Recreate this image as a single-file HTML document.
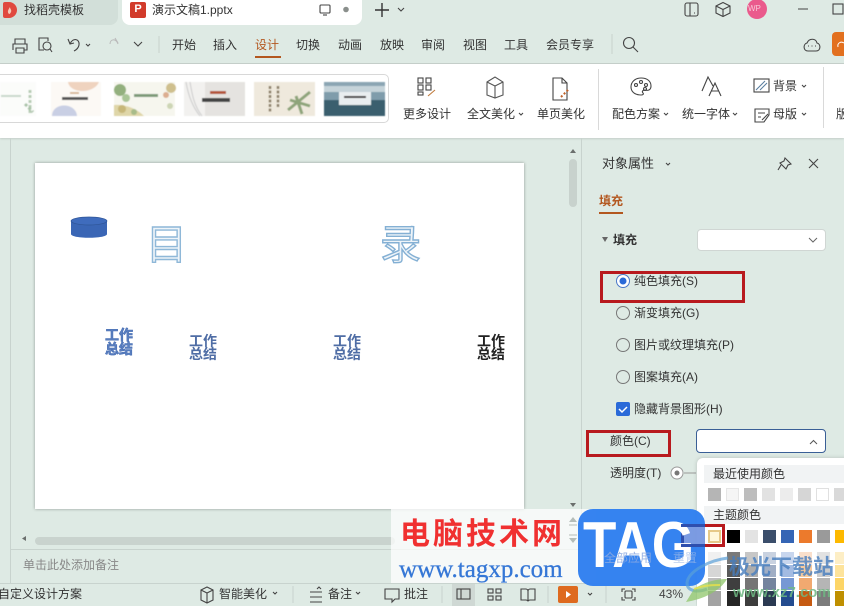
<!DOCTYPE html>
<html><head><meta charset="utf-8">
<style>
*{box-sizing:border-box}
html,body{margin:0;padding:0}
body{width:844px;height:606px;position:relative;overflow:hidden;background:#deeae4;font-family:"Liberation Sans","Noto Sans CJK SC",sans-serif;color:#333;font-size:12px}
.a{position:absolute}
.t{position:absolute;white-space:nowrap;line-height:16px}
svg{position:absolute;overflow:visible}
.s{fill:none;stroke:#444;stroke-width:1.1}
.sw{position:absolute;width:13px;height:13px}
</style></head><body>

<!-- tab bar -->
<div class="a" style="left:0;top:0;width:118px;height:25px;background:#d2dfd9;border-radius:0 0 8px 0"></div>
<div class="a" style="left:3px;top:2px;width:14px;height:16px;background:#e0493f;border-radius:2px 8px 8px 2px"></div>
<svg style="left:0;top:0" width="20" height="20"><path d="M9 14c-2-2-1-4 1-7 0 2 2 3 1 5-.5 1-1 2-2 2z" fill="#f6c9b8"/></svg>
<div class="t" style="left:24px;top:2px;font-size:12px;color:#333">找稻壳模板</div>
<div class="a" style="left:122px;top:0;width:240px;height:25px;background:#fff;border-radius:0 0 8px 8px"></div>
<div class="a" style="left:130px;top:2px;width:16px;height:16px;background:#d23b2b;border-radius:2px;color:#fff;font-size:11px;font-weight:bold;text-align:center;line-height:15px">P</div>
<div class="t" style="left:152px;top:2px;font-size:12px;color:#333">演示文稿1.pptx</div>
<svg style="left:0;top:0" width="844" height="64">
<rect class="s" x="320" y="5" width="10" height="8" rx="1" stroke="#777"/><path class="s" d="M323 15h4"/>
<circle cx="346" cy="9.500" r="2.800" fill="#8a8f8c"/>
<path d="M375 10h14M382 3v14" stroke="#333" stroke-width="1.400" fill="none"/>
<path class="s" d="M398 8l3 3 3-3"/>
<rect class="s" x="685" y="3" width="13" height="13" rx="2"/><path class="s" d="M690 3v13M694 13h1"/>
<path class="s" d="M723 2.500l7 3.500v7l-7 3.500-7-3.500v-7zM716 6l7 3.500 7-3.500M723 9.500v7"/>
<circle cx="757" cy="9" r="10" fill="#ea5a8c"/>
<path d="M798 9h10" stroke="#444" stroke-width="1"/>
<rect class="s" x="833" y="4" width="10" height="10"/>
</svg>
<div class="t" style="left:748px;top:1px;font-size:8px;color:#f7c9d8">WP</div>

<!-- toolbar -->
<svg style="left:0;top:0" width="844" height="64">
<g class="s"><path d="M15 44v-5h10v5M13 50v-6h14v6h-3M16 48h8v5h-8z"/>
<path d="M46 38h-7v12h5M44 38h4v3"/><circle cx="47" cy="46" r="4"/><path d="M50 49l2 3"/>
<path d="M70 44c3-7 10-5 9 1-.5 3-3 5-5 6M68 39l2 5 4-1"/><path d="M86 44l2 2 2-2"/>
<path d="M118 44c-2-6-8-5-8 0" stroke="#bbb"/><path d="M115 38l3 5" stroke="#bbb"/>
<path d="M134 42l4 4 4-4"/></g>
<path d="M159 36v17M612 34v20" stroke="#c8d2cd"/>
<g class="s"><circle cx="629" cy="43" r="5.500"/><path d="M633 47l5 5"/>
<path d="M808 51h8c5 0 5-7 1-8-1-5-8-5-10 0-4 1-4 8 1 8z"/><path d="M808 46h1M811.500 46h1M815 46h1"/></g>
<rect x="832" y="32" width="20" height="24" rx="4" fill="#e2701f"/>
<path d="M838 47c-1-4 3-6 6-4" stroke="#fff" fill="none"/>
<path d="M0 63.500h844" stroke="#c6d0cb"/>
</svg>
<div class="t" style="left:172px;top:37px">开始</div>
<div class="t" style="left:213px;top:37px">插入</div>
<div class="t" style="left:255px;top:37px;color:#b3571f">设计</div>
<div class="a" style="left:255px;top:56px;width:26px;height:2px;background:#b3571f"></div>
<div class="t" style="left:296px;top:37px">切换</div>
<div class="t" style="left:338px;top:37px">动画</div>
<div class="t" style="left:380px;top:37px">放映</div>
<div class="t" style="left:421px;top:37px">审阅</div>
<div class="t" style="left:463px;top:37px">视图</div>
<div class="t" style="left:504px;top:37px">工具</div>
<div class="t" style="left:546px;top:37px">会员专享</div>

<!-- ribbon -->
<div class="a" style="left:0;top:64px;width:844px;height:74px;background:#fff;box-shadow:0 1px 2px rgba(0,0,0,.12)"></div>
<div class="a" style="left:-8px;top:74px;width:397px;height:49px;background:#fff;border:1px solid #d8d8d8;border-radius:5px"></div>
<!-- thumbs -->
<svg style="left:0;top:82px" width="390" height="34">
<defs><filter id="b" x="-20%" y="-20%" width="140%" height="140%"><feGaussianBlur stdDeviation=".6"/></filter></defs>
<g filter="url(#b)">
<rect x="0" y="0" width="36" height="34" fill="#fbfcfa"/>
<path d="M1 14h20" stroke="#c8d8cc" stroke-width="2"/>
<path d="M30 8v24" stroke="#b7ccb5" stroke-width="3" stroke-dasharray="3 2"/>
<path d="M25 22l8 8" stroke="#a9c3a8" stroke-width="3" stroke-dasharray="3 2"/>
<rect x="51" y="0" width="50" height="34" fill="#fcf9f5"/>
<path d="M68 0c2 12 26 12 31 0z" fill="#efd3bf"/>
<path d="M52 34c0-14 24-14 25 0z" fill="#c9cfe4"/>
<rect x="62" y="15" width="26" height="3" fill="#555"/><rect x="70" y="10" width="9" height="2" fill="#d8b89a"/>
<rect x="114" y="0" width="61" height="34" fill="#f6f6ee"/>
<circle cx="120" cy="8" r="6" fill="#93b07e"/><circle cx="126" cy="16" r="4" fill="#a9c596"/>
<path d="M114 34v-11c10-1 22 3 30 11z" fill="#dfd6a8"/><circle cx="122" cy="27" r="4" fill="#c7b779"/><circle cx="134" cy="30" r="3" fill="#a8bc8a"/>
<circle cx="171" cy="6" r="5" fill="#cfc08e"/><circle cx="166" cy="13" r="3" fill="#dcae90"/><circle cx="170" cy="24" r="3" fill="#cdd6b5"/>
<rect x="134" y="12" width="24" height="3" fill="#7d9a78"/>
<rect x="184" y="0" width="61" height="34" fill="#f2f1ef"/>
<rect x="205" y="0" width="40" height="34" fill="#e5e3e0"/>
<path d="M186 0c2 12 6 24 14 34M190 0c2 12 4 24 12 34" stroke="#ccc" fill="none"/>
<rect x="210" y="9" width="16" height="3" fill="#b4573a"/><rect x="202" y="16" width="28" height="4" fill="#444"/>
<rect x="254" y="0" width="61" height="34" fill="#efe9dd"/>
<path d="M270 4v26M278 4v22" stroke="#8b7f66" stroke-width="2.500" stroke-dasharray="3 1.500"/>
<path d="M288 28l22-18M296 14l6 18M290 18l20 6" stroke="#8ea47a" stroke-width="3" fill="none"/>
<rect x="324" y="0" width="61" height="34" fill="#7f9cab"/>
<rect x="324" y="0" width="61" height="10" fill="#8ba5b3"/>
<path d="M324 4l61 0 0 6-61 0z" fill="#c5d3d9"/>
<rect x="324" y="18" width="61" height="16" fill="#3b5f6e"/>
<rect x="339" y="10" width="32" height="13" fill="#e9eef0"/><rect x="344" y="14" width="22" height="2" fill="#333"/>
</g>
</svg>

<svg style="left:0;top:64px" width="844" height="74">
<path d="M598.500 5v61M823.500 3v61" stroke="#d9d9d9"/>
<g class="s" transform="translate(0,0)">
<rect x="418" y="14" width="5" height="5"/><rect x="426" y="14" width="5" height="5"/><rect x="418" y="21" width="5" height="5"/><rect x="426" y="21" width="5" height="5"/><rect x="418" y="28" width="5" height="3"/>
<path d="M428 32l7-6" stroke="#c07a3c"/>
<path d="M487 18l8-5 8 5v13l-8 3-8-3zM487 18l8 4 8-4M495 22v12" stroke="#555"/>
<path d="M553 14h9l5 5v17h-14zM562 14v5h5"/>
<path d="M561 33l8-8" stroke="#c0622a" stroke-dasharray="2 2" stroke-width="2"/>
<path d="M641 31c-7 0-10-4-10-8 0-5 4-9 10-9s10 3 10 8c0 4-3 5-6 4-3 0-3 2-2 3s0 2-2 2z"/>
<circle cx="636" cy="21" r="1.500"/><circle cx="641" cy="18" r="1.500"/><circle cx="646" cy="21" r="1.500"/><circle cx="645" cy="25" r="1.500"/>
<path d="M702 27l6-14 5 9M709 32l6-13 6 13M711 27h8"/>
<rect x="754" y="15" width="15" height="13"/><path d="M756 26l9-9M760 26l7-7" stroke="#5a7fa0"/>
<path d="M755 45h14v6l-5 7h-9zM758 49h7M758 53h3M762 56l6-6" />
</g>
</svg>
<div class="t" style="left:403px;top:106px">更多设计</div>
<div class="t" style="left:467px;top:106px">全文美化</div>
<div class="t" style="left:537px;top:106px">单页美化</div>
<div class="t" style="left:612px;top:106px">配色方案</div>
<div class="t" style="left:682px;top:106px">统一字体</div>
<div class="t" style="left:773px;top:78px">背景</div>
<div class="t" style="left:773px;top:106px">母版</div>
<div class="t" style="left:836px;top:106px">版</div>
<svg style="left:0;top:0" width="844" height="130"><g class="s">
<path d="M519 113l2 2 2-2M664 113l2 2 2-2M733 113l2 2 2-2M802 85l2 2 2-2M802 113l2 2 2-2"/></g></svg>

<!-- workspace -->
<div class="a" style="left:10px;top:138px;width:1px;height:445px;background:#c8d3ce"></div>
<div class="a" style="left:581px;top:138px;width:1px;height:445px;background:#c8d3ce"></div>
<div class="a" style="left:35px;top:163px;width:489px;height:346px;background:#fff;box-shadow:0 0 3px rgba(0,0,0,.35)"></div>
<div class="a" style="left:569px;top:159px;width:8px;height:48px;background:#c8d2cd;border-radius:4px"></div>
<svg style="left:0;top:0" width="600" height="560">
<path d="M570 153l3-4 3 4z" fill="#6b6f6d"/><path d="M570 503l3 4 3-4z" fill="#6b6f6d"/><path d="M26 541l-4-2.500 4-2.500z" fill="#6b6f6d"/>
<!-- cylinder -->
<path d="M71 221v13c0 5 36 5 36 0v-13z" fill="#3a66b5"/>
<ellipse cx="89" cy="221" rx="18" ry="4" fill="#3f6cbd" stroke="#2f5597" stroke-width=".7"/>
</svg>
<div class="t" style="left:146px;top:220px;font-size:41px;line-height:50px;color:#eef4f9;-webkit-text-stroke:1.400px #8fb8d8">目</div>
<div class="t" style="left:380px;top:220px;font-size:41px;line-height:50px;color:#eef4f9;-webkit-text-stroke:1.400px #84b0d4">录</div>
<div class="t" style="left:105px;top:328px;font-size:14px;line-height:14px;font-weight:bold;color:#5b80c0;-webkit-text-stroke:.6px #4a70b5;width:30px;white-space:normal;letter-spacing:0">工作总结</div>
<div class="t" style="left:189px;top:335px;font-size:14px;line-height:13px;font-weight:bold;color:#4f6da5;width:30px;white-space:normal">工作总结</div>
<div class="t" style="left:333px;top:335px;font-size:14px;line-height:13px;font-weight:bold;color:#4f6da5;width:30px;white-space:normal">工作总结</div>
<div class="t" style="left:477px;top:335px;font-size:14px;line-height:13px;font-weight:bold;color:#222;width:30px;white-space:normal">工作总结</div>
<div class="a" style="left:35px;top:537px;width:360px;height:8px;background:#c9d3ce;border-radius:4px"></div>
<div class="a" style="left:10px;top:549px;width:571px;height:1px;background:#c8d3ce"></div>
<div class="t" style="left:23px;top:557px;color:#888;font-size:12px">单击此处添加备注</div>

<!-- panel -->
<div class="t" style="left:602px;top:156px;font-size:13px;color:#333">对象属性</div>
<svg style="left:0;top:0" width="844" height="606"><g class="s">
<path d="M666 163l2 2 2-2"/>
<path d="M785 158l6 6-3 1-2 4-6-6 4-2zM781 165l-3 5"/>
<path d="M809 159l9 9M818 159l-9 9"/></g>
<path d="M602 237h6l-3 5z" fill="#666"/>
<circle cx="623" cy="281" r="6.500" fill="#fff" stroke="#4a78c8"/><circle cx="623" cy="281" r="3.500" fill="#2a6ad8"/>
<circle cx="623" cy="313" r="6.500" fill="none" stroke="#777"/>
<circle cx="623" cy="345" r="6.500" fill="none" stroke="#777"/>
<circle cx="623" cy="377" r="6.500" fill="none" stroke="#777"/>
<rect x="616" y="402" width="14" height="14" rx="2" fill="#2a6ad8"/>
<path d="M619 409l3 3 5-5" stroke="#fff" stroke-width="1.500" fill="none"/>
<circle cx="677" cy="473" r="6" fill="#fff" stroke="#999"/><circle cx="677" cy="473" r="2.500" fill="#777"/>
<path d="M684 473h12" stroke="#999"/>
</svg>
<div class="t" style="left:599px;top:193px;color:#b3571f;font-size:12px;font-weight:bold">填充</div>
<div class="a" style="left:599px;top:212px;width:24px;height:2px;background:#b3571f"></div>
<div class="t" style="left:613px;top:232px;font-weight:bold;color:#333">填充</div>
<div class="a" style="left:697px;top:229px;width:129px;height:22px;background:#fff;border:1px solid #d0d6d3;border-radius:4px"></div>
<svg style="left:0;top:0;z-index:1" width="844" height="260"><path d="M809 238l4 4 4-4" fill="none" stroke="#666"/></svg>
<div class="a" style="left:600px;top:271px;width:145px;height:32px;border:3px solid #b81a1e"></div>
<div class="t" style="left:634px;top:273px">纯色填充(S)</div>
<div class="t" style="left:634px;top:305px">渐变填充(G)</div>
<div class="t" style="left:634px;top:337px">图片或纹理填充(P)</div>
<div class="t" style="left:634px;top:369px">图案填充(A)</div>
<div class="t" style="left:634px;top:401px">隐藏背景图形(H)</div>
<div class="a" style="left:586px;top:430px;width:85px;height:27px;border:3px solid #b81a1e"></div>
<div class="t" style="left:610px;top:433px">颜色(C)</div>
<div class="a" style="left:696px;top:429px;width:130px;height:24px;background:#fff;border:1px solid #3a5f96;border-radius:4px"></div>
<svg style="left:0;top:0;z-index:1" width="844" height="460"><path d="M810 444l3.500-3.500 3.500 3.500" fill="none" stroke="#555"/></svg>
<div class="t" style="left:610px;top:465px">透明度(T)</div>

<!-- dropdown -->
<div class="a" style="left:697px;top:458px;width:160px;height:148px;background:#fff;border-radius:6px 0 0 0;box-shadow:0 0 4px rgba(0,0,0,.18)"></div>
<div class="a" style="left:704px;top:465px;width:140px;height:18px;background:#f1f3f4"></div>
<div class="t" style="left:713px;top:466px">最近使用颜色</div>
<div class="a" style="left:704px;top:506px;width:140px;height:18px;background:#f1f3f4"></div>
<div class="t" style="left:713px;top:507px">主题颜色</div>
<div class="sw" style="left:708px;top:488px;background:#b5b5b5"></div>
<div class="sw" style="left:726px;top:488px;background:#f5f5f5;border:1px solid #e5e5e5"></div>
<div class="sw" style="left:744px;top:488px;background:#bdbdbd"></div>
<div class="sw" style="left:762px;top:488px;background:#e2e2e2"></div>
<div class="sw" style="left:780px;top:488px;background:#ececec"></div>
<div class="sw" style="left:798px;top:488px;background:#d6d6d6"></div>
<div class="sw" style="left:816px;top:488px;background:#fff;border:1px solid #e0e0e0"></div>
<div class="sw" style="left:834px;top:488px;background:#d9d9d9"></div>
<!-- theme colours -->
<div class="sw" style="left:708px;top:530px;background:#fff8dc;border:2px solid #e6c988"></div>
<div class="sw" style="left:727px;top:530px;background:#000"></div>
<div class="sw" style="left:745px;top:530px;background:#e3e3e3"></div>
<div class="sw" style="left:763px;top:530px;background:#3b4e6b"></div>
<div class="sw" style="left:781px;top:530px;background:#3565b5"></div>
<div class="sw" style="left:799px;top:530px;background:#ec7a2c"></div>
<div class="sw" style="left:817px;top:530px;background:#9a9a9a"></div>
<div class="sw" style="left:835px;top:530px;background:#fdb900"></div>
<svg style="left:708px;top:550px" width="136" height="56">
<rect x="0" y="2" width="13" height="12" fill="#f0f0f0"/><rect x="19" y="2" width="13" height="12" fill="#7a7a7a"/><rect x="37" y="2" width="13" height="12" fill="#c7c7c7"/><rect x="55" y="2" width="13" height="12" fill="#c9d2e0"/><rect x="73" y="2" width="13" height="12" fill="#c8d6ee"/><rect x="91" y="2" width="13" height="12" fill="#fadfcb"/><rect x="109" y="2" width="13" height="12" fill="#e2e2e2"/><rect x="127" y="2" width="13" height="12" fill="#fdeec5"/>
<rect x="0" y="15" width="13" height="12" fill="#d6d6d6"/><rect x="19" y="15" width="13" height="12" fill="#5a5a5a"/><rect x="37" y="15" width="13" height="12" fill="#adadad"/><rect x="55" y="15" width="13" height="12" fill="#a0aec5"/><rect x="73" y="15" width="13" height="12" fill="#a3bbe2"/><rect x="91" y="15" width="13" height="12" fill="#f6ca9f"/><rect x="109" y="15" width="13" height="12" fill="#cccccc"/><rect x="127" y="15" width="13" height="12" fill="#fde39b"/>
<rect x="0" y="28" width="13" height="12" fill="#bdbdbd"/><rect x="19" y="28" width="13" height="12" fill="#3f3f3f"/><rect x="37" y="28" width="13" height="12" fill="#757575"/><rect x="55" y="28" width="13" height="12" fill="#74849e"/><rect x="73" y="28" width="13" height="12" fill="#7698d4"/><rect x="91" y="28" width="13" height="12" fill="#f1a970"/><rect x="109" y="28" width="13" height="12" fill="#b5b5b5"/><rect x="127" y="28" width="13" height="12" fill="#fdd566"/>
<rect x="0" y="41" width="13" height="15" fill="#a3a3a3"/><rect x="19" y="41" width="13" height="15" fill="#262626"/><rect x="37" y="41" width="13" height="15" fill="#3d3d3d"/><rect x="55" y="41" width="13" height="15" fill="#2b3a52"/><rect x="73" y="41" width="13" height="15" fill="#244c8f"/><rect x="91" y="41" width="13" height="15" fill="#c65a11"/><rect x="109" y="41" width="13" height="15" fill="#7c7c7c"/><rect x="127" y="41" width="13" height="15" fill="#bf8f00"/>
</svg>

<!-- status bar -->
<div class="a" style="left:0;top:583px;width:696px;height:23px;background:#deeae4;border-top:1px solid #c8d3ce"></div>
<div class="t" style="left:-2px;top:586px">自定义设计方案</div>
<div class="t" style="left:219px;top:586px">智能美化</div>
<div class="t" style="left:328px;top:586px">备注</div>
<div class="t" style="left:404px;top:586px">批注</div>
<div class="t" style="left:659px;top:586px;color:#444">43%</div>
<div class="a" style="left:452px;top:584px;width:23px;height:22px;background:#cfd8d4"></div>
<div class="a" style="left:558px;top:586px;width:20px;height:17px;background:#de6a1f;border-radius:2px"></div>
<svg style="left:0;top:0" width="700" height="606"><g class="s">
<path d="M201 590l6-3 6 3v10l-6 3-6-3zM201 590l6 3 6-3M207 593v10"/>
<path d="M273 592l2 2 2-2M356 592l2 2 2-2M588 593l2 2 2-2"/>
<path d="M310 592h12M310 597h12M310 602h12M317 589l2-2 2 2"/>
<path d="M385 589h14v10h-4l-3 3v-3h-7z"/>
<rect x="457" y="589" width="13" height="10"/><path d="M461 589v10"/>
<rect x="488" y="589" width="5" height="4"/><rect x="496" y="589" width="5" height="4"/><rect x="488" y="596" width="5" height="4"/><rect x="496" y="596" width="5" height="4"/>
<path d="M521 589h5c1 0 2 1 2 2 0-1 1-2 2-2h5v11h-5c-1 0-2 1-2 1 0 0-1-1-2-1h-5zM528 591v10"/>
<path d="M622 592v-3h3M632 589h3v3M635 597v3h-3M625 600h-3v-3"/><rect x="625" y="591" width="7" height="7" rx="1"/>
</g>
<path d="M566 591l5 3.500-5 3.500z" fill="#fff"/>
<path d="M293 586v17M442 586v17M548 586v17M606 586v17" stroke="#c8d3ce"/>
</svg>

<!-- watermark -->
<div class="a" style="left:391px;top:509px;width:205px;height:74px;background:rgba(255,255,255,.72);z-index:3"></div>
<div class="t" style="left:400px;top:512px;font-size:30px;line-height:38px;font-weight:bold;color:#f03030;letter-spacing:3px;font-family:'Noto Sans CJK SC',sans-serif;z-index:4">电脑技术网</div>
<div class="t" style="left:399px;top:556px;font-size:25px;line-height:27px;color:#3577d6;font-family:'Liberation Serif',serif;z-index:4;-webkit-text-stroke:.3px #3577d6">www.tagxp.com</div>
<svg style="left:565px;top:515px;z-index:4" width="20" height="30"><path d="M4 7l4-5 4 5zM4 23l4 5 4-5z" fill="#b5bdb9"/><path d="M4 10h8M4 20h8" stroke="#b5bdb9"/></svg>
<div class="a" style="left:578px;top:509px;width:127px;height:77px;background:#2f7ff0;border-radius:15px;z-index:5;opacity:.97"></div>
<div class="a" style="left:684px;top:526px;width:21px;height:20px;background:rgba(255,200,200,.35);z-index:6"></div>
<div class="a" style="left:681px;top:524px;width:26px;height:23px;border:3px solid #2f4fae;border-right:0;z-index:6"></div>
<div class="t" style="left:583px;top:511px;font-size:65px;line-height:68px;font-weight:bold;color:#fff;z-index:7;transform:scaleX(.84);transform-origin:left top">TAG</div>
<div class="t" style="left:604px;top:550px;font-size:12px;color:rgba(140,170,225,.9);z-index:8">全部应用</div>
<div class="t" style="left:673px;top:550px;font-size:12px;color:rgba(160,185,230,.7);z-index:8">重置</div>
<div class="a" style="left:705px;top:524px;width:20px;height:23px;border:3px solid #b81a1e;border-left:0;z-index:8"></div>
<div class="a" style="left:681px;top:524px;width:44px;height:3px;background:linear-gradient(90deg,#2f4fae 0 55%,#b81a1e 55%);z-index:8"></div>
<div class="a" style="left:681px;top:544px;width:44px;height:3px;background:linear-gradient(90deg,#2f4fae 0 55%,#b81a1e 55%);z-index:8"></div>

<!-- xz7 watermark -->
<svg style="left:680px;top:555px;z-index:9" width="60" height="51">
<path d="M48 3C30 5 8 16 7 28c0 8 10 10 20 6" fill="none" stroke="#5aa0d8" stroke-width="3" opacity=".7"/>
<path d="M14 34C26 26 38 24 47 24 40 36 24 44 6 47z" fill="#8fc56a" opacity=".75"/>
<path d="M14 34C24 30 34 30 40 30" stroke="#e8e14a" stroke-width="2" opacity=".8" fill="none"/>
</svg>
<div class="t" style="left:729px;top:554px;font-size:21px;line-height:28px;font-weight:bold;color:rgba(70,125,190,.8);z-index:9">极光下载站</div>
<div class="t" style="left:733px;top:584px;font-size:15px;line-height:18px;color:rgba(110,185,130,.85);z-index:9;font-weight:bold">www.xz7.com</div>
</body></html>
